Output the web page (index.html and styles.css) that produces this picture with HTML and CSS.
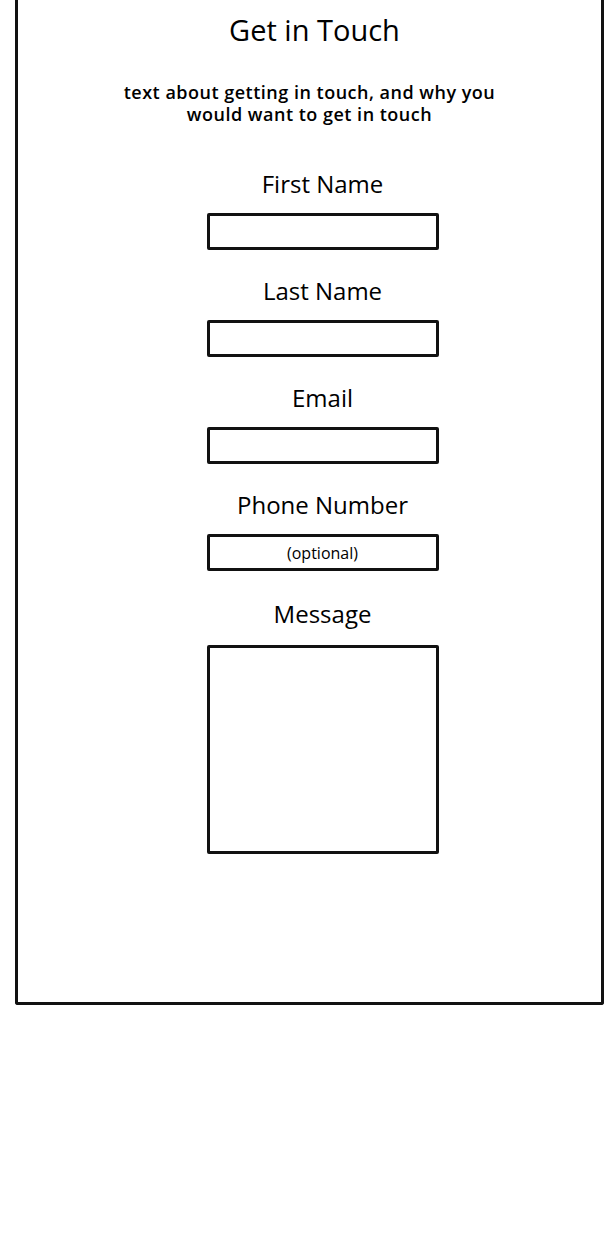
FILE: index.html
```html
<!DOCTYPE html>
<html>
<head>
    <title>Get in Touch</title>
    <link rel="stylesheet" href="styles.css">
</head>
<body>
    <div class="frame">
        <h2 class="title">Get in Touch</h2>
        <p class="intro">text about getting in touch, and why you<br>would want to get in touch</p>
        <form class="contact-form">
            <div class="field">
                <label for="firstName">First Name</label>
                <input type="text" id="firstName" name="firstName">
            </div>
            <div class="field">
                <label for="lastName">Last Name</label>
                <input type="text" id="lastName" name="lastName">
            </div>
            <div class="field">
                <label for="email">Email</label>
                <input type="text" id="email" name="email">
            </div>
            <div class="field">
                <label for="phone">Phone Number</label>
                <input type="text" id="phone" name="phone" placeholder="(optional)">
            </div>
            <div class="field message-field">
                <label for="message">Message</label>
                <textarea id="message" name="message"></textarea>
            </div>
        </form>
    </div>
</body>
</html>
```

FILE: styles.css
```css
body {
    font-family: "Open Sans", Lato, sans-serif;
    margin: 0;
    padding: 0;
    background-color: #fff;
    color: #000;
}

.frame {
    box-sizing: border-box;
    width: 589px;
    height: 1005px;
    margin-left: 15px;
    border: 3px solid #111;
    border-top: none;
    border-radius: 0 0 3px 3px;
    text-align: center;
}

.title {
    margin: 0;
    padding: 13px 0 0 10px;
    font-size: 29px;
    font-weight: 400;
    line-height: 34px;
}

.intro {
    margin: 34px 0 0;
    font-size: 18px;
    font-weight: 600;
    letter-spacing: 0.5px;
    line-height: 22px;
}

.contact-form {
    margin-top: 45px;
    padding-left: 26px;
    display: flex;
    flex-direction: column;
    align-items: center;
    gap: 27px;
}

.field {
    display: flex;
    flex-direction: column;
    align-items: center;
}

.field label {
    font-size: 24px;
    line-height: 28px;
    margin-bottom: 15px;
}

.field input,
.field textarea {
    box-sizing: border-box;
    width: 232px;
    height: 37px;
    border: 3px solid #111;
    border-radius: 2px;
    background: #fff;
    font-family: inherit;
    font-size: 16px;
    font-weight: 500;
    text-align: center;
    padding: 0;
}

.field input::placeholder {
    color: #000;
}

.message-field {
    margin-top: 2px;
}

.message-field label {
    margin-bottom: 17px;
}

.field textarea {
    height: 209px;
    resize: none;
}
```
